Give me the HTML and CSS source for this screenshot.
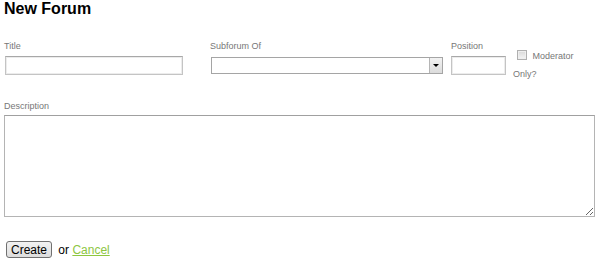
FILE: index.html
```html
<!DOCTYPE html>
<html lang="en">
    <head>
        <meta charset="UTF-8">
        <title>New Forum</title>
        <link rel="stylesheet" href="styles.css">
    </head>
    <body>
        <h1>New Forum</h1>
        <form class="forum-form">
            <div class="fields">
                <div class="field field-title">
                    <label for="title">Title</label>
                    <input type="text" id="title" class="text-input title-input">
                </div>
                <div class="field field-parent">
                    <label for="parent">Subforum Of</label>
                    <div class="select-wrap">
                        <select id="parent" class="select-input">
                            <option></option>
                        </select>
                        <span class="select-arrow"></span>
                    </div>
                </div>
                <div class="field field-position">
                    <label for="position">Position</label>
                    <input type="text" id="position" class="text-input position-input">
                </div>
                <div class="field field-moderator">
                    <label class="check-label">
                        <input type="checkbox" class="check-input">
                        Moderator Only?
                    </label>
                </div>
            </div>

            <div class="field field-description">
                <label for="description">Description</label>
                <textarea id="description" class="textarea-input"></textarea>
            </div>

            <div class="actions">
                <button type="button" class="button">Create</button>
                or <a href="#" class="cancel-link">Cancel</a>
            </div>
        </form>
    </body>
</html>
```

FILE: styles.css
```css
body {
    margin: 0;
    padding: 0 4px;
    font-family: "Liberation Sans", Arial, sans-serif;
    color: #000;
    background: #fff;
}
h1 {
    font-size: 16px;
    font-weight: bold;
    margin: 0;
    padding-top: 1px;
    line-height: 16px;
}
.forum-form {
    margin-top: 24px;
}
.fields {
    display: flex;
    align-items: flex-start;
}
.field label {
    display: block;
    font-size: 9px;
    color: #777;
    line-height: 10px;
    height: 12px;
}
.field-title {
    width: 206px;
}
.field-parent {
    width: 241px;
}
.field-position {
    width: 62px;
}
.text-input {
    box-sizing: border-box;
    height: 19px;
    margin: 3px 0 0 1px;
    border: 1px solid #c4c4c4;
    border-top-color: #a8a8a8;
    box-shadow: inset 0 0 0 1px #ececec;
    padding: 1px 3px;
    font-family: inherit;
    font-size: 12px;
}
.title-input {
    width: 178px;
}
.position-input {
    width: 55px;
    margin-left: 0;
}
.select-wrap {
    position: relative;
    width: 232px;
    margin: 4px 0 0 1px;
}
.select-input {
    appearance: none;
    box-sizing: border-box;
    width: 232px;
    height: 17px;
    border: 1px solid #a5a5a5;
    border-radius: 0;
    background: #fff;
    font-family: inherit;
    font-size: 11px;
    display: block;
}
.select-arrow {
    position: absolute;
    right: 1px;
    top: 1px;
    width: 13px;
    height: 15px;
    box-sizing: border-box;
    border-left: 1px solid #b5b5b5;
    background: linear-gradient(#f2f2f2, #dcdcdc);
    pointer-events: none;
}
.select-arrow::after {
    content: "";
    position: absolute;
    left: 3px;
    top: 6px;
    border-left: 3px solid transparent;
    border-right: 3px solid transparent;
    border-top: 3px solid #000;
}
.field .check-label {
    height: auto;
    width: 68px;
    padding-top: 6px;
    font-size: 9px;
    line-height: 18px;
    color: #777;
}
.check-input {
    appearance: none;
    width: 10px;
    height: 10px;
    margin: 0 3px 0 4px;
    vertical-align: -1px;
    border: 1px solid #b0b0b0;
    background: linear-gradient(#d8d8d8, #f4f4f4);
    box-shadow: inset 0 0 0 1px #eee;
}
.field-description {
    margin-top: 18px;
}
.textarea-input {
    display: block;
    box-sizing: border-box;
    width: 591px;
    height: 102px;
    margin-top: 2px;
    border: 1px solid #b4b4b4;
    border-top-color: #a0a0a0;
    font-family: inherit;
    font-size: 12px;
}
.actions {
    margin-top: 24px;
    font-size: 12px;
    padding-left: 2px;
}
.button {
    font-family: inherit;
    font-size: 12px;
    padding: 0 4px;
    height: 17px;
    line-height: 14px;
    margin-right: 3px;
    border: 1px solid #707070;
    border-radius: 3px;
    background: linear-gradient(#f2f2f2, #dddddd);
    color: #000;
}
.cancel-link {
    color: #8dc63f;
}
```
